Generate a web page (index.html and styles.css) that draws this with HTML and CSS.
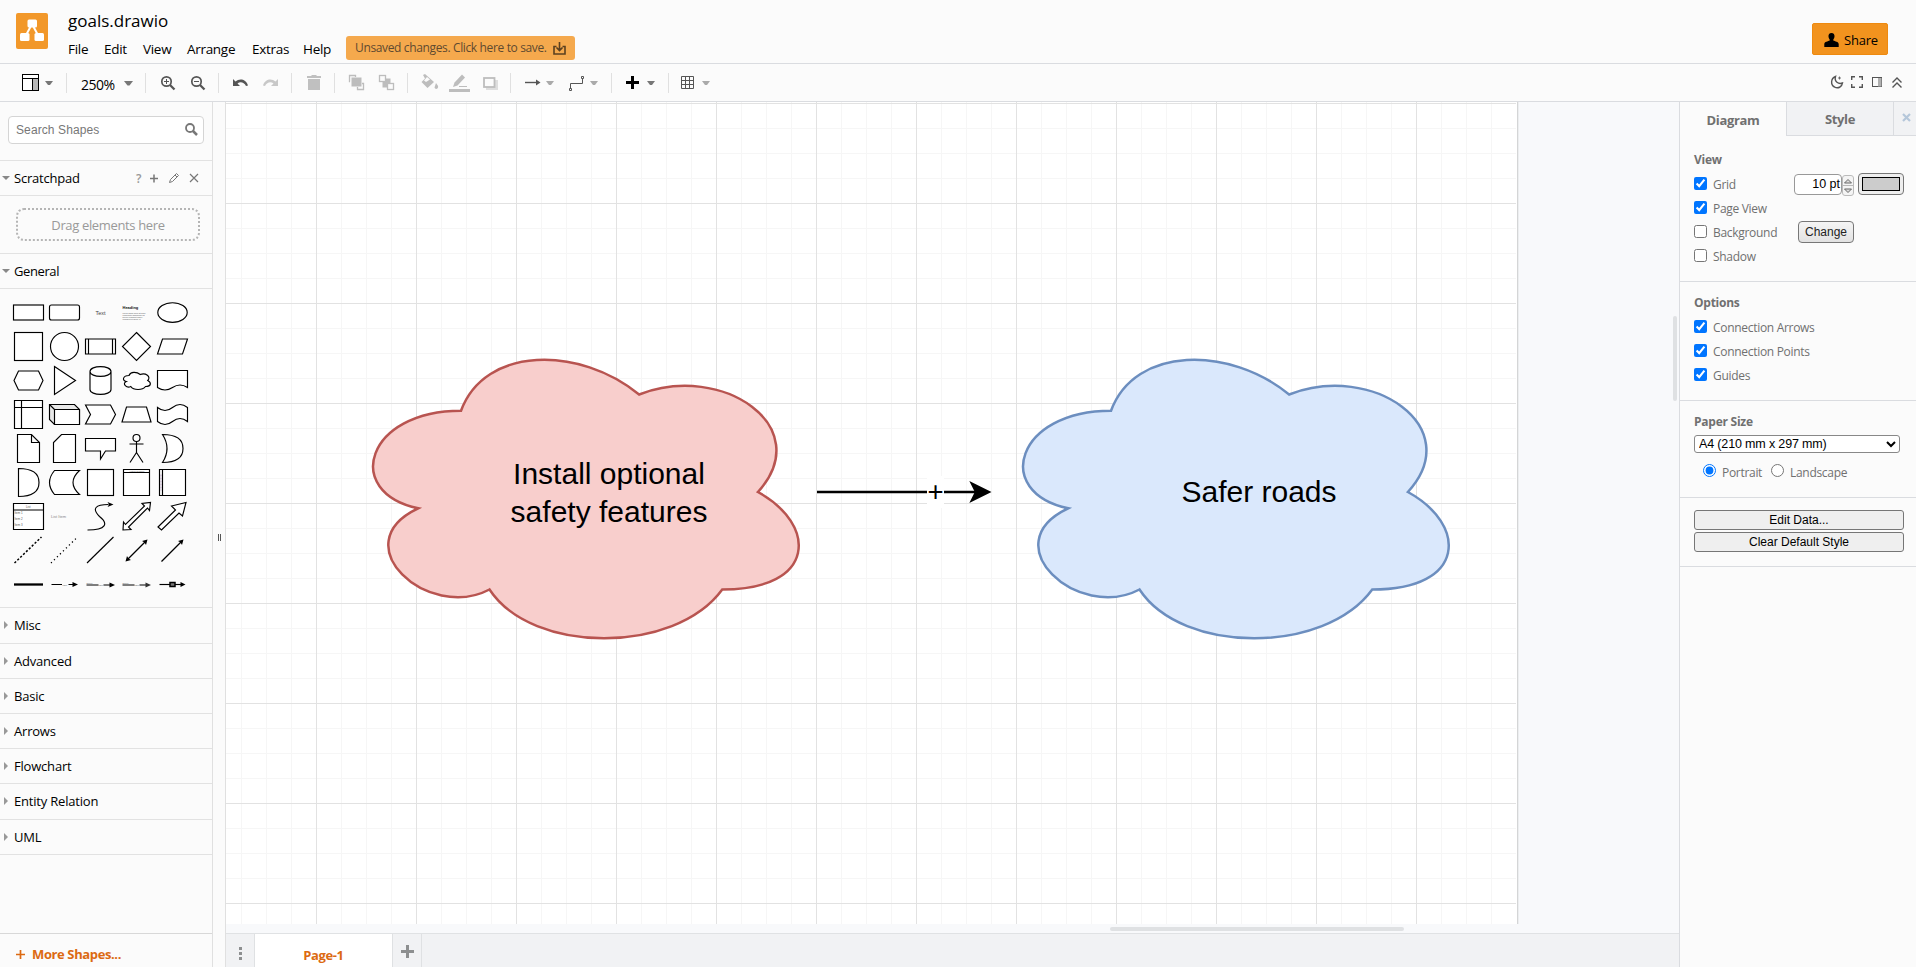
FILE: index.html
```html
<!DOCTYPE html>
<html lang="en">
<head>
<meta charset="utf-8">
<title>goals.drawio</title>
<link rel="stylesheet" href="styles.css">
</head>
<body>
<header class="header">
  <svg class="logo" width="32" height="36" viewBox="0 0 32 36"><rect width="32" height="36" rx="2" fill="#f2982a"/><path d="M16 11L9 24M16 11L23 24" stroke="#fff" stroke-width="2"/><rect x="11.500" y="6.500" width="9.500" height="8" rx="1.500" fill="#fff"/><rect x="4" y="20" width="9.500" height="8" rx="1.500" fill="#fff"/><rect x="18.500" y="20" width="9.500" height="8" rx="1.500" fill="#fff"/></svg>
  <div class="titles">
    <div class="filename">goals.drawio</div>
    <nav class="menu">
      <span class="m-file">File</span><span class="m-edit">Edit</span><span class="m-view">View</span><span class="m-arrange">Arrange</span><span class="m-extras">Extras</span><span class="m-help">Help</span>
      <span class="unsaved"><span>Unsaved changes. Click here to save.</span><svg width="13" height="13" viewBox="0 0 13 13" fill="none" stroke="#5b4020" stroke-width="1.600"><path d="M3.500 4.500H1V12H12V4.500H9.500M6.500 0V8M3.500 5.500L6.500 8.500L9.500 5.500"/></svg></span>
    </nav>
  </div>
  <div class="share"><svg width="15" height="14" viewBox="0 0 15 14"><path d="M7.500 0C5.300 0 4.300 1.600 4.500 3.600C4.600 5 5.200 6 5.700 6.600V7.600C4 8.500 .5 8.800 .3 11V14H14.700V11C14.500 8.800 11 8.500 9.300 7.600V6.600C9.800 6 10.400 5 10.500 3.600C10.700 1.600 9.700 0 7.500 0Z"/></svg><span>Share</span></div>
</header>

<div class="toolbar">
  <div class="group g1"><svg width="66" height="37" viewBox="0 64 66 37"><rect x="22.500" y="74.500" width="16" height="16" fill="#fff" stroke="#000"/><path d="M22 78.500H39M32.500 79V90" stroke="#000"/><rect x="33" y="79" width="5" height="11" fill="#b8b8b8"/><path d="M45 81H53L50 85H48Z" fill="#777"/></svg></div>
  <div class="group g2"><span class="zoom">250%</span><svg width="9" height="5" viewBox="0 0 9 5"><path d="M0 0H9L5.500 4.500H3.500Z" fill="#777"/></svg></div>
  <div class="group g3"><svg width="72" height="37" viewBox="146 64 72 37" fill="none" stroke="#555"><circle cx="166.500" cy="81.500" r="4.700" stroke-width="1.700"/><path d="M170 85L174.500 89.500" stroke-width="2.300"/><path d="M164 81.500H169M166.500 79V84"/><circle cx="196.500" cy="81.500" r="4.700" stroke-width="1.700"/><path d="M200 85L204.500 89.500" stroke-width="2.300"/><path d="M194 81.500H199"/></svg></div>
  <div class="group g4"><svg width="72" height="37" viewBox="219 64 72 37"><path d="M233 79V86H240L237.500 83.500C240 81.500 244 82 246 86L248 85.500C246 79 239.500 78 235.500 81.500Z" fill="#555"/><path d="M278 79V86H271L273.500 83.500C271 81.500 267 82 265 86L263 85.500C265 79 271.500 78 275.500 81.500Z" fill="#c8c8c8"/></svg></div>
  <div class="group g5"><svg width="42" height="37" viewBox="292 64 42 37" fill="#c0c0c0"><path d="M307 76H311L312 75H316L317 76H321V78H307ZM308 79H320V90H308Z"/></svg></div>
  <div class="group g6"><svg width="72" height="37" viewBox="335 64 72 37" fill="none" stroke="#bdbdbd"><rect x="352" y="78" width="9" height="8" fill="#bdbdbd"/><path d="M350 81.500H349.500V75.500H355.500V77M357.500 87V89.500H363.500V83.500H362" stroke-width="1.300"/><rect x="383" y="79" width="7" height="8" fill="#bdbdbd"/><rect x="379.500" y="75.500" width="6" height="6" fill="#fbfbfb" stroke-width="1.300"/><rect x="387.500" y="83.500" width="6" height="6" fill="#fbfbfb" stroke-width="1.300"/></svg></div>
  <div class="group g7"><svg width="102" height="37" viewBox="408 64 102 37" fill="#bdbdbd"><path d="M423 75L425 74L434 82L427.500 88L421.500 82L425 78.500ZM436 83C438 86 438.500 86 438 87.500A1.800 1.800 0 0 1 434.500 87.500Z"/><path d="M427 77L424 80.500L426 82L430 79.500Z" fill="#fbfbfb"/><rect x="449" y="89" width="21" height="3"/><path d="M453 87L454.500 82.500L462 74.500L465 77.500L457.500 85.500Z"/><path d="M459 86.500H467" stroke="#bdbdbd"/><rect x="486" y="80" width="12" height="10" fill="#dedede"/><rect x="484" y="78" width="10.500" height="9" fill="#fbfbfb" stroke="#bdbdbd" stroke-width="1.800"/></svg></div>
  <div class="group g8"><svg width="100" height="37" viewBox="511 64 100 37" fill="none"><path d="M525 82.500H537" stroke="#555" stroke-width="1.400"/><path d="M536 79.500L540.500 82.500L536 85.500Z" fill="#555"/><path d="M546 81H554L551 85H549ZM590 81H598L595 85H593Z" fill="#aaa"/><path d="M570.500 88V83.500H582.500V79" stroke="#555"/><path d="M569.500 88.500H571.500V90.500H569.500ZM581.500 76.500H583.500V78.500H581.500Z" stroke="#555"/></svg></div>
  <div class="group g9"><svg width="56" height="37" viewBox="612 64 56 37"><path d="M631 76H634V81H639V84H634V89H631V84H626V81H631Z" fill="#000"/><path d="M647 81H655L652 85H650Z" fill="#777"/></svg></div>
  <div class="group g10"><svg width="56" height="37" viewBox="669 64 56 37"><path d="M681.500 76.500H693.500V88.500H681.500ZM685.500 76V89M689.500 76V89M681 80.500H694M681 84.500H694" fill="none" stroke="#555"/><path d="M702 81H710L707 85H705Z" fill="#aaa"/></svg></div>
  <svg class="right-tools" width="86" height="37" viewBox="1830 64 86 37" fill="none" stroke="#555" stroke-width="1.400"><path d="M1835.500 76.500C1830.500 78.500 1830.500 85 1834.500 87C1838 89 1842 87 1842.500 83C1838.500 84.500 1834 81.500 1835.500 76.500Z"/><path d="M1839.500 76.500V79.500M1838 78H1841" stroke-width=".8"/><path d="M1851.700 80V76.700H1855M1859 76.700H1862.300V80M1862.300 84V87.300H1859M1855 87.300H1851.700V84"/><rect x="1872.500" y="77.500" width="9" height="9" stroke-width="1"/><rect x="1878" y="78" width="3.500" height="8.500" fill="#b0b0b0" stroke="none"/><path d="M1892.500 82.500L1897 78L1901.500 82.500M1892.500 87.500L1897 83L1901.500 87.500"/></svg>
</div>

<main class="main">
  <aside class="sidebar">
    <div class="search-wrap"><div class="search"><span>Search Shapes</span><svg width="13" height="13" viewBox="0 0 13 13" fill="none" stroke="#777"><circle cx="5" cy="5" r="4" stroke-width="1.800"/><path d="M8 8L12 12" stroke-width="2.500"/></svg></div></div>
    <div class="section open scratch"><span>Scratchpad</span><svg width="64" height="14" viewBox="135 171 64 14" fill="none" stroke="#777"><text x="136" y="182.500" class="help">?</text><path d="M150 178.500H158M154 174.500V182.500" stroke-width="1.500"/><path d="M169.500 182.500L170.500 179.500L176.500 173.500L178.500 175.500L172.500 181.500ZM175 175L177 177"/><path d="M190 174L198 182M198 174L190 182" stroke-width="1.200"/></svg></div>
    <div class="drop-wrap"><div class="drop">Drag elements here</div></div>
    <div class="section open general"><span>General</span></div>
    <div class="palette">
      <svg viewBox="-18.5 -17.5 36 34"><rect x="-15" y="-7.500" width="30" height="15"/></svg>
      <svg viewBox="-18.5 -17.5 36 34"><rect x="-15" y="-7.500" width="30" height="15" rx="2"/></svg>
      <svg viewBox="-18.5 -17.5 36 34"><text x="-5" y="2" class="tiny">Text</text></svg>
      <svg viewBox="-18.5 -17.5 36 34"><text x="-14" y="-4" class="head">Heading</text><text x="-14" y="1" class="micro">Lorem ipsum dolor sit amet,</text><text x="-14" y="3" class="micro">consectetur adipisicing elit,</text><text x="-14" y="5" class="micro">sed do eiusmod tempor</text><text x="-14" y="7" class="micro">incididunt ut labore et</text></svg>
      <svg viewBox="-18.5 -17.5 36 34"><ellipse rx="14.700" ry="9.800"/></svg>

      <svg viewBox="-18.5 -17.5 36 34"><rect x="-14" y="-14" width="28" height="28"/></svg>
      <svg viewBox="-18.5 -17.5 36 34"><circle r="14"/></svg>
      <svg viewBox="-18.5 -17.5 36 34"><path d="M-15-7.500H15V7.500H-15ZM-12-7.500V7.500M12-7.500V7.500"/></svg>
      <svg viewBox="-18.5 -17.5 36 34"><path d="M0-14L14 0L0 14L-14 0Z"/></svg>
      <svg viewBox="-18.5 -17.5 36 34"><path d="M-10-7.500H15L10 7.500H-15Z"/></svg>

      <svg viewBox="-18.5 -17.5 36 34"><path d="M-10-9.500H10L14.500 0L10 9.500H-10L-14.500 0Z"/></svg>
      <svg viewBox="-18.5 -17.5 36 34"><path d="M-10-14L11 0L-10 14Z"/></svg>
      <svg viewBox="-18.5 -17.5 36 34"><path d="M-10.500-9C-10.500-15.500 10.500-15.500 10.500-9V9C10.500 15.500-10.500 15.500-10.500 9ZM-10.500-9C-10.500-2.500 10.500-2.500 10.500-9"/></svg>
      <svg viewBox="-18.5 -17.5 36 34"><path d="M-7.500-5C-13.500-5-15 0-10.200 1C-15 3.200-9.600 8-5.700 6C-3 10 6 10 9 6C15 6 15 2 11.250 0C15-4 9-8 3.750-6C0-9-6-9-7.500-5Z"/></svg>
      <svg viewBox="-18.5 -17.5 36 34"><path d="M-15-10H15V7Q7.500 2 0 7T-15 7Z"/></svg>

      <svg viewBox="-18.5 -17.5 36 34"><path d="M-14-14H14V14H-14ZM-7-14V14M-14-7H14"/></svg>
      <svg viewBox="-18.5 -17.5 36 34"><path d="M-15-10H10L15-5V10H-10L-15 5Z" fill="#e8e8e8"/><path d="M-10-5H15V10H-10ZM-15-10L-10-5"/></svg>
      <svg viewBox="-18.5 -17.5 36 34"><path d="M-15-9.500H10L15 0L10 9.500H-15L-10 0Z"/></svg>
      <svg viewBox="-18.5 -17.5 36 34"><path d="M-10-7.500H10L14.500 7.500H-14.500Z"/></svg>
      <svg viewBox="-18.5 -17.5 36 34"><path d="M-15-7Q-7.500-1 0-7T15-7V7Q7.500 1 0 7T-15 7Z"/></svg>

      <svg viewBox="-18.5 -17.5 36 34"><path d="M-11-14H3L11-6V14H-11ZM3-14V-6H11"/></svg>
      <svg viewBox="-18.5 -17.5 36 34"><path d="M-3-14H11V14H-11V-6Z"/></svg>
      <svg viewBox="-18.5 -17.5 36 34"><path d="M-15-10H15V2.500H5L0 10.500V2.500H-15Z"/></svg>
      <svg viewBox="-18.5 -17.5 36 34"><circle cy="-10.500" r="3.500"/><path d="M0-7V4M-7-4.500H7M0 4L-6.500 14M0 4L6.500 14" fill="none"/></svg>
      <svg viewBox="-18.5 -17.5 36 34"><path d="M-10-14Q10.500-14 10.500 0T-10 14Q-1 0-10-14Z"/></svg>

      <svg viewBox="-18.5 -17.5 36 34"><path d="M-10-14Q10.500-14 10.500 0T-10 14Z"/></svg>
      <svg viewBox="-18.5 -17.5 36 34"><path d="M-10-12H15Q8.500-6 8.500 0T15 12H-10Q-15 6-15 0T-10-12Z"/></svg>
      <svg viewBox="-18.5 -17.5 36 34"><rect x="-13" y="-13" width="26" height="26"/></svg>
      <svg viewBox="-18.5 -17.5 36 34"><path d="M-13-13H13V13H-13ZM-13-10H13"/><text x="-7" y="-10.800" class="micro">Vertical Container</text></svg>
      <svg viewBox="-18.5 -17.5 36 34"><path d="M-13-13H13V13H-13ZM-10-13V13"/><path d="M-11.500-8V8" stroke="#a98bb5" stroke-dasharray="2 1" stroke-width=".8"/></svg>

      <svg viewBox="-18.5 -17.5 36 34"><path d="M-15-13H15V13H-15ZM-15-6.500H15"/><text x="-2.500" y="-8.800" class="list">List</text><text x="-14" y="-2.500" class="list">Item 1</text><text x="-14" y="3.500" class="list">Item 2</text><text x="-14" y="9.500" class="list">Item 3</text></svg>
      <svg viewBox="-18.5 -17.5 36 34"><text x="-13.500" y="1.500" class="list-item">List Item</text></svg>
      <svg viewBox="-18.5 -17.5 36 34"><path d="M-13 13.500C6 13.500 8 7-1 0C-9-8-5-12 8-12" fill="none"/><path d="M13-12L7-14.500L8.500-12L7-9.500Z" fill="#000" stroke="none"/></svg>
      <svg viewBox="-18.5 -17.5 36 34"><path d="M-13.500 13.500L-13 5.500L-11 8L8-10.500L5.500-13L14-14L13-6L11-8.500L-8 10.500L-5.500 13Z"/></svg>
      <svg viewBox="-18.5 -17.5 36 34"><path d="M-14.500 10.500L3-6.500L-1-10.500L13.500-14L10-.5L6.500-3.500L-11 13.500Z"/></svg>

      <svg viewBox="-18.5 -17.5 36 34"><path d="M-14 12.500L13-13.500" stroke-dasharray="2.200 1.800" stroke-width="1.500"/></svg>
      <svg viewBox="-18.5 -17.500 36 34"><path d="M-13.500 12.500L12-12.500" stroke-dasharray="1.200 3" stroke-width="1.300"/></svg>
      <svg viewBox="-18.5 -17.5 36 34"><path d="M-13.500 12.500L13-13.500"/></svg>
      <svg viewBox="-18.5 -17.5 36 34"><path d="M-9 9L9-9"/><path d="M-11 11L-9.500 5.500L-8 8L-5.500 9.500ZM11-11L9.500-5.500L8-8L5.500-9.500Z" fill="#000" stroke="none"/></svg>
      <svg viewBox="-18.5 -17.5 36 34"><path d="M-11 11L9-9"/><path d="M11-11L9.500-5.500L8-8L5.500-9.500Z" fill="#000" stroke="none"/></svg>

      <svg viewBox="-18.5 -17.5 36 34"><path d="M-14.500 0H14.500" stroke-width="2.300"/></svg>
      <svg viewBox="-18.5 -17.5 36 34"><path d="M-13 0H-2.500M4 0H9" /><text x="-2" y="1" class="micro">Label</text><path d="M13.500 0L8-2.500V2.500Z" fill="#000" stroke="none"/></svg>
      <svg viewBox="-18.5 -17.5 36 34"><path d="M-14 .5H-2M3 .5H10" /><text x="-14" y="-.5" class="micro">Source</text><text x="-2" y="1" class="micro">Label</text><path d="M14.500 .5L9-2V3Z" fill="#000" stroke="none"/></svg>
      <svg viewBox="-18.5 -17.5 36 34"><path d="M-14 .5H-2M3 .5H10" /><text x="-14" y="-.5" class="micro">Source</text><text x="-2" y="1" class="micro">Label</text><path d="M14.500 .5L9-2V3Z" fill="#333" stroke="none"/></svg>
      <svg viewBox="-18.5 -17.5 36 34"><path d="M-13 0H9"/><rect x="-2.500" y="-2" width="5" height="4" fill="#777" stroke-width="1.500"/><path d="M13 0L8-2.500V2.500Z" fill="#000" stroke="none"/></svg>
    </div>
    <div class="section tall">Misc</div>
    <div class="section">Advanced</div>
    <div class="section">Basic</div>
    <div class="section">Arrows</div>
    <div class="section">Flowchart</div>
    <div class="section tall">Entity Relation</div>
    <div class="section">UML</div>
    <div class="more"><svg width="9" height="9" viewBox="0 0 9 9"><path d="M4.500 0V9M0 4.500H9" stroke="#dc6a12" stroke-width="1.700"/></svg><span>More Shapes...</span></div>
  </aside>
  <div class="splitter"><i></i></div>

  <section class="editor">
    <svg class="canvas" width="1453" height="831" viewBox="226 102 1453 831">
      <defs>
        <pattern id="minor" x="216" y="103" width="25" height="25" patternUnits="userSpaceOnUse"><path d="M0 .5H25M.5 0V25" stroke="#f6f6f6"/></pattern>
        <pattern id="major" x="216" y="103" width="100" height="100" patternUnits="userSpaceOnUse"><path d="M0 .5H100M.5 0V100" stroke="#e2e2e2"/></pattern>
        <path id="cloud" d="M118.750 81.250C23.750 81.250 0 162.500 76 178.750C0 214.500 85.500 292.500 147.250 260C190 325 332.500 325 380 260C475 260 475 195 415.625 162.500C475 97.500 380 32.500 296.875 65C237.500 16.250 142.500 16.250 118.750 81.250Z"/>
      </defs>
      <rect x="226" y="102" width="1291" height="822" fill="#fff"/>
      <rect x="226" y="102" width="1290" height="822" fill="url(#minor)"/>
      <rect x="226" y="102" width="1290" height="822" fill="url(#major)"/>
      <rect x="1517" y="102" width="1" height="822" fill="#d4d5d6"/>
      <rect x="1518" y="102" width="1" height="822" fill="#eceef0"/>
      <use href="#cloud" x="342.250" y="329.500" fill="#f8cecc" stroke="#b85450" stroke-width="2.500"/>
      <use href="#cloud" x="992.250" y="329.500" fill="#dae8fc" stroke="#6c8ebf" stroke-width="2.500"/>
      <path d="M817 492H975" stroke="#000" stroke-width="2.500"/>
      <path d="M991.500 492L969.300 503L974.800 492L969.300 481Z"/>
      <rect x="927" y="476" width="17" height="32" fill="#fff"/>
      <g class="labels"><text x="609" y="484">Install optional</text><text x="609" y="521.500">safety features</text><text x="1259" y="501.500">Safer roads</text><text x="935.500" y="501" class="plus">+</text></g>
      <rect x="1110" y="927" width="294" height="4" rx="2" fill="#dfe1e3"/>
      <rect x="1673" y="316" width="4" height="85" rx="2" fill="#dfe1e3"/>
    </svg>
    <div class="tabs">
      <div class="dots"><i></i><i></i><i></i></div>
      <div class="page-tab">Page-1</div>
      <div class="add-tab"><svg width="13" height="13" viewBox="0 0 13 13"><path d="M6.500 0V13M0 6.500H13" stroke="#8d8f90" stroke-width="3"/></svg></div>
    </div>
  </section>

  <aside class="format">
    <div class="format-tabs"><div class="ft-active">Diagram</div><div class="ft-style">Style</div><div class="ft-close"><svg width="9" height="9" viewBox="0 0 9 9"><path d="M1 1L8 8M8 1L1 8" stroke="#b5c7da" stroke-width="2.200"/></svg></div></div>
    <div class="panel view">
      <h3>View</h3>
      <div class="row"><input type="checkbox" checked><span>Grid</span><div class="grid-size"><span>10 pt</span></div><div class="stepper"><svg width="10" height="19" viewBox="0 0 10 19"><path d="M0 9.500H10" stroke="#b8b8b8"/><path d="M1.500 7H8.500L5 3.500ZM1.500 13H8.500L5 16.500Z" fill="#ddd" stroke="#666"/></svg></div><div class="swatch"><i></i></div></div>
      <div class="row"><input type="checkbox" checked><span>Page View</span></div>
      <div class="row"><input type="checkbox"><span>Background</span><button class="change">Change</button></div>
      <div class="row"><input type="checkbox"><span>Shadow</span></div>
    </div>
    <div class="panel options">
      <h3>Options</h3>
      <div class="row"><input type="checkbox" checked><span>Connection Arrows</span></div>
      <div class="row"><input type="checkbox" checked><span>Connection Points</span></div>
      <div class="row"><input type="checkbox" checked><span>Guides</span></div>
    </div>
    <div class="panel paper">
      <h3>Paper Size</h3>
      <select><option>A4 (210 mm x 297 mm)</option></select>
      <div class="radios"><input type="radio" name="o" checked><span class="portrait">Portrait</span><input type="radio" name="o"><span>Landscape</span></div>
    </div>
    <div class="panel actions"><button>Edit Data...</button><button>Clear Default Style</button></div>
  </aside>
</main>
</body>
</html>
```
FILE: styles.css
```css
* { box-sizing: border-box; }
html { height: 967px; overflow: hidden; }
body { margin: 0; width: 1916px; height: 967px; overflow: hidden; background: #fbfbfb; color: #000; font-family: "Open Sans", "Noto Sans", sans-serif; font-size: 13px; display: flex; flex-direction: column; }
svg { display: block; flex: none; }
span { white-space: nowrap; }

.header { height: 64px; flex: none; border-bottom: 1px solid #dadce0; display: flex; align-items: flex-start; }
.logo { margin: 13px 0 0 16px; }
.titles { margin-left: 20px; flex: 1; }
.filename { font-size: 17px; letter-spacing: 0; line-height: 24px; margin-top: 9px; font-stretch: 94%; }
.menu { display: flex; height: 24px; margin-top: 3px; line-height: 26px; font-size: 13.5px; letter-spacing: -.3px; }
.m-file { width: 36px; }
.m-edit { width: 39px; }
.m-view { width: 44px; }
.m-arrange { width: 65px; }
.m-extras { width: 51px; }
.m-help { width: 43px; }
.unsaved { width: 229px; height: 24px; background: #f5a94d; border-radius: 3px; display: flex; align-items: center; padding-left: 9px; gap: 6px; font-size: 12px; letter-spacing: -.36px; color: #5f4a30; }
.unsaved span { width: 192px; }
.share { width: 76px; height: 32px; margin: 23px 28px 0 0; background: #f2931e; border: 1px solid #ee8a10; border-radius: 2px; display: flex; align-items: center; padding: 2px 0 0 11px; gap: 5px; font-size: 13px; font-weight: 500; letter-spacing: -.2px; }

.toolbar { height: 38px; flex: none; border-bottom: 1px solid #dadce0; display: flex; }
.group { display: flex; align-items: center; }
.group + .group::before { content: ""; width: 1px; height: 20px; background: #e0e0e0; }
.g2 { width: 79px; }
.g2 svg { margin-top: 1px; }
.zoom { width: 43px; margin-left: 14px; font-size: 14px; letter-spacing: -.5px; padding-top: 4px; }
.right-tools { margin-left: auto; }

.main { flex: none; display: flex; height: 865px; }
.sidebar { width: 213px; border-right: 1px solid #e0e0e0; display: flex; flex-direction: column; }
.search-wrap { height: 59px; padding: 14px 8px 0; border-bottom: 1px solid #e2e2e2; }
.search { height: 28px; border: 1px solid #d5d5d5; border-radius: 4px; background: #fff; display: flex; align-items: center; justify-content: space-between; padding: 0 5px 1px 7px; color: #777; font: 12px "Liberation Sans", sans-serif; letter-spacing: .1px; }
.section { height: 35px; flex: none; border-bottom: 1px solid #e2e2e2; display: flex; align-items: center; font-size: 13px; font-weight: 500; letter-spacing: -.2px; padding-bottom: 1px; }
.section.tall { height: 36px; }
.section.general { letter-spacing: -.4px; }
.section::before { content: ""; border: 4px solid transparent; border-left-color: #999; border-right: 0; margin: 0 6px 0 4px; }
.section.open::before { border: 4px solid transparent; border-top-color: #888; border-bottom: 0; margin: 0 4px 0 2px; }
.scratch svg { margin-left: auto; margin-right: 13px; }
.help { font: 600 12px "Open Sans", sans-serif; fill: #999; stroke: none; }
.drop-wrap { height: 58px; padding: 12px 12px 0 16px; border-bottom: 1px solid #e2e2e2; }
.drop { height: 33px; border: 2px dotted #b5b5b5; border-radius: 8px; text-align: center; color: #999; line-height: 30px; font-size: 13px; letter-spacing: -.35px; }
.palette { height: 319px; border-bottom: 1px solid #e2e2e2; display: grid; grid-template-columns: repeat(5, 36px); grid-auto-rows: 34px; padding: 6px 0 0 10px; flex: none; }
.palette svg { width: 36px; height: 34px; fill: #fff; stroke: #000; stroke-width: 1.15; }
.palette text { stroke: none; font-family: "Liberation Sans", sans-serif; }
.palette .tiny { font-size: 5.5px; fill: #444; }
.palette .head { font-size: 4px; font-weight: bold; fill: #111; }
.palette .micro { font-size: 1.9px; fill: #555; }
.palette .list { font-size: 2.9px; fill: #555; }
.palette .list-item { font-size: 4px; fill: #888; }
.more { margin-top: auto; height: 34px; border-top: 1px solid #d8d8d8; display: flex; align-items: center; padding: 7px 0 0 16px; gap: 7px; color: #dc6a12; font-weight: 700; font-size: 13px; letter-spacing: -.38px; }
.splitter { width: 13px; border-right: 1px solid #e0e0e0; display: flex; align-items: center; justify-content: center; }
.splitter i { width: 3px; height: 7px; border: 1px solid #555; border-width: 0 1px; margin-top: 5px; }

.editor { width: 1453px; background: #f8f9fb; }
.labels { font: 30px "Liberation Sans", sans-serif; text-anchor: middle; }
.plus { font-size: 27.5px; }
.tabs { height: 34px; border-top: 1px solid #e0e2e4; background: #f1f2f4; display: flex; }
.dots { width: 29px; border-right: 1px solid #dfe1e3; display: flex; flex-direction: column; align-items: center; gap: 2px; padding-top: 13px; }
.dots i { width: 3px; height: 3px; background: #8d8f90; }
.page-tab { width: 138px; background: #fff; border-right: 1px solid #dfe1e3; color: #dc6a12; font-weight: 700; letter-spacing: -.4px; text-align: center; line-height: 42px; }
.add-tab { width: 29px; border-right: 1px solid #dfe1e3; display: flex; justify-content: center; padding-top: 11px; }

.format { width: 237px; border-left: 1px solid #dadce0; color: #707070; font-size: 12px; letter-spacing: -.3px; }
.format-tabs { height: 34px; display: flex; font-weight: 700; font-size: 13px; letter-spacing: -.35px; text-align: center; }
.ft-active { width: 106px; line-height: 37px; }
.ft-style { width: 107px; line-height: 35px; background: #f1f2f4; border: 1px solid #dadce0; border-width: 0 0 1px 1px; }
.ft-close { flex: 1; background: #f1f2f4; border: 1px solid #dadce0; border-width: 0 0 1px 1px; padding: 11px 0 0 8px; }
.panel { border-bottom: 1px solid #dadce0; padding-left: 14px; }
.panel h3 { margin: 0 0 2px; font-size: 12px; line-height: 20px; letter-spacing: -.25px; }
.panel input { margin: 0; width: 13px; height: 13px; flex: none; }
.view { height: 146px; padding-top: 14px; }
.options { height: 119px; padding-top: 11px; }
.row { height: 24px; display: flex; align-items: center; }
.row > input { margin-top: -1px; }
.row > span { margin-left: 6px; padding-top: 2px; line-height: 20px; }
.grid-size { width: 48px; height: 21px; border: 1px solid #999; border-radius: 4px; background: #fff; color: #000; font: 12.5px/19px "Liberation Sans", sans-serif; text-align: right; padding-right: 1px; margin-left: auto; letter-spacing: 0; }
.stepper { width: 12px; height: 21px; border: 1px solid #bbb; border-radius: 3px; background: #f4f4f4; margin-top: 2px; }
.swatch { width: 46px; height: 22px; border: 1px solid #777; border-radius: 4px; background: #eee; padding: 3px; margin: 0 12px 0 4px; }
.swatch i { display: block; height: 14px; background: #ccc; border: 1px solid #000; }
.change { width: 56px; height: 22px; border: 1px solid #777; border-radius: 4px; background: linear-gradient(#f5f5f5, #e2e2e2); font: 12px "Liberation Sans", sans-serif; color: #222; padding: 0; margin: 0 62px 0 auto; }
.paper { height: 97px; padding-top: 11px; }
.paper h3 { margin-bottom: 3px; }
.paper select { display: block; width: 206px; height: 18px; font: 12.5px "Liberation Sans", sans-serif; color: #000; background: #fff; border: 1px solid #888; border-radius: 3px; padding: 0; letter-spacing: -.15px; }
.radios { display: flex; padding: 11px 0 0 9px; line-height: 17px; }
.radios span { margin-left: 6px; }
.radios .portrait { width: 43px; margin-right: 6px; }
.actions { height: 69px; padding: 12px 12px 0 14px; display: flex; flex-direction: column; gap: 2px; }
.actions button { height: 20px; border: 1px solid #767676; border-radius: 3px; background: #efefef; color: #000; font: 12px "Liberation Sans", sans-serif; padding: 0; }
```
